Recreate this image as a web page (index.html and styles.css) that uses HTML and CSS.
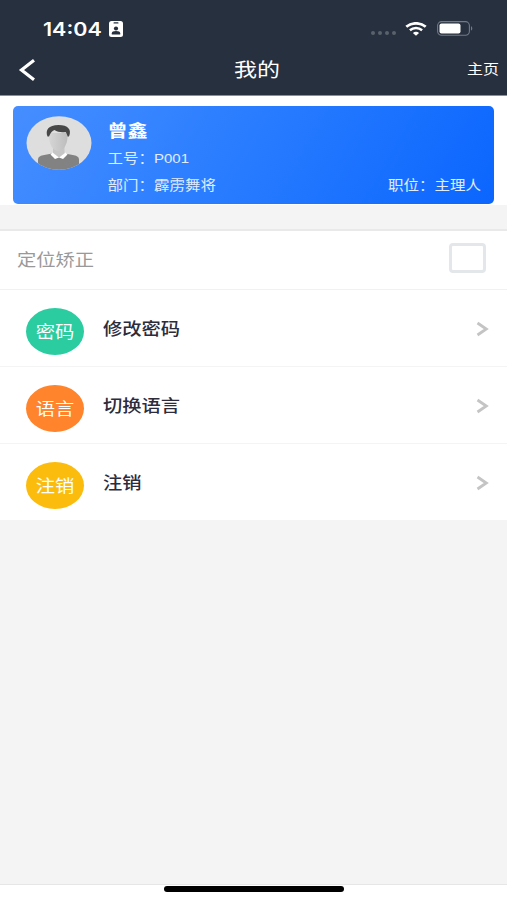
FILE: index.html
```
<!DOCTYPE html>
<html lang="zh-CN">
<head>
    <meta charset="UTF-8">
    <title>我的</title>
    <link rel="stylesheet" href="styles.css">
</head>
<body>
    <!-- Header -->
    <div class="header">
        <div class="status-bar">
            <span class="time txt">14:04</span>
            <svg class="id-icon" width="14" height="16" viewBox="0 0 14 16">
                <rect width="14" height="16" rx="2.5" fill="#fff"/>
                <rect x="4.5" y="1.3" width="5" height="1.3" rx=".6" fill="#27303f"/>
                <circle cx="7" cy="7.500" r="2.100" fill="#27303f"/>
                <path d="M2.800 13.500V12.300c0-1.500 1.500-2.300 4.200-2.300s4.200.8 4.200 2.300v1.200z" fill="#27303f"/>
            </svg>
            <div class="dots"><i></i><i></i><i></i><i></i></div>
            <svg class="wifi" width="22" height="14" viewBox="0 0 22 14">
                <path d="M1.300 4.800C6.600.2 15.400.2 20.700 4.800" fill="none" stroke="#fff" stroke-width="2.800"/>
                <path d="M4.900 8.200C8.400 5.200 13.600 5.200 17.100 8.200" fill="none" stroke="#fff" stroke-width="2.500"/>
                <path d="M7.900 10.900C9.600 9.500 12.400 9.500 14.100 10.900L11 13.800z" fill="#fff"/>
            </svg>
            <svg class="battery" width="36" height="15" viewBox="0 0 36 15">
                <rect x=".6" y=".6" width="31.800" height="13.600" rx="4" fill="none" stroke="#737a85" stroke-width="1.100"/>
                <rect x="2.500" y="2.400" width="21" height="10" rx="2" fill="#fff"/>
                <path d="M34 5.200c1.700.6 1.700 3.800 0 4.400z" fill="#737a85"/>
            </svg>
        </div>
        <div class="nav-bar">
            <svg class="back" width="18" height="22" viewBox="0 0 18 22">
                <path d="M16 1.300L3.500 11l12.500 9.700" fill="none" stroke="#fff" stroke-width="3.200"/>
            </svg>
            <span class="title txt">我的</span>
            <span class="home txt">主页</span>
        </div>
    </div>

    <!-- User card -->
    <div class="profile">
        <div class="card">
            <svg class="avatar" width="66" height="54" viewBox="0 0 66 54">
                <defs>
                    <clipPath id="face"><ellipse cx="33" cy="27" rx="32.500" ry="26.800"/></clipPath>
                    <linearGradient id="skin">
                        <stop offset="0" stop-color="#d6d6d6"/>
                        <stop offset="1" stop-color="#bdbdbd"/>
                    </linearGradient>
                </defs>
                <g clip-path="url(#face)">
                    <rect width="66" height="54" fill="#dedede"/>
                    <path d="M12 54V43.500c0-2.500 2-3.500 5-4.200l9-1.800h13l9 1.800c3 .7 5 1.700 5 4.200V54z" fill="#828282"/>
                    <path d="M27 29h11.500v8.500L33 42l-6-4.500z" fill="#c6c6c6"/>
                    <path d="M26.500 36.500l6.500 5-4 1.500-4.500-4.500zM39.500 36.500L33 41.500l4 1.500 4.500-4.500z" fill="#fff"/>
                    <path d="M23 17h18.500v4c0 7-4 14-9.200 14S23 28 23 21z" fill="url(#skin)"/>
                    <path d="M21.500 20.500c-2.500-6.500 1-11.500 11-11.500 9.500 0 13.500 4.500 10.500 11.500h-1.500c-.3-2-1-3.500-2-4.500-4 .7-8 0-11-2-2 .7-4 2.500-5.500 6.500z" fill="#474747"/>
                </g>
            </svg>
            <div class="info">
                <div class="name"><span class="txt">曾鑫</span></div>
                <div class="line"><span class="txt">工号：<span class="code">P001</span></span></div>
                <div class="line dept">
                    <span class="txt">部门：霹雳舞将</span>
                    <span class="txt">职位：主理人</span>
                </div>
            </div>
        </div>
    </div>

    <!-- Settings -->
    <div class="list">
        <div class="row locate">
            <span class="txt">定位矫正</span>
            <div class="checkbox"></div>
        </div>
        <div class="row">
            <div class="badge green"><span class="txt">密码</span></div>
            <span class="label txt">修改密码</span>
            <svg class="arrow" width="13" height="16" viewBox="0 0 13 16"><path d="M1.500 2L10.300 8l-8.800 6" fill="none" stroke="#c4c4c4" stroke-width="2.800"/></svg>
        </div>
        <div class="row">
            <div class="badge orange"><span class="txt">语言</span></div>
            <span class="label txt">切换语言</span>
            <svg class="arrow" width="13" height="16" viewBox="0 0 13 16"><path d="M1.500 2L10.300 8l-8.800 6" fill="none" stroke="#c4c4c4" stroke-width="2.800"/></svg>
        </div>
        <div class="row">
            <div class="badge yellow"><span class="txt">注销</span></div>
            <span class="label txt">注销</span>
            <svg class="arrow" width="13" height="16" viewBox="0 0 13 16"><path d="M1.500 2L10.300 8l-8.800 6" fill="none" stroke="#c4c4c4" stroke-width="2.800"/></svg>
        </div>
    </div>

    <div class="footer"><div class="home-bar"></div></div>
</body>
</html>
```
FILE: styles.css
```
* {
    box-sizing: border-box;
}
body {
    display: flex;
    flex-direction: column;
    height: 900px;
    margin: 0;
    background: #f4f4f4;
    font-family: "Noto Sans CJK SC", sans-serif;
    overflow: hidden;
}
svg {
    display: block;
    flex: none;
}
/* Wide, flat lettering */
.txt {
    display: inline-block;
    line-height: 1;
    white-space: nowrap;
    transform: scaleY(0.86);
}

/* Header */
.header {
    height: 96px;
    background: #27303f;
    border-bottom: 1px solid #8b8e9c;
    color: #fff;
}
.status-bar {
    display: flex;
    align-items: center;
    height: 45px;
    padding: 12px 34px 0 43px;
}
.time {
    font-family: Inter, sans-serif;
    font-size: 21.5px;
    font-weight: 600;
    width: 66px;
    margin-top: 2px;
}
.id-icon {
    margin-top: 1px;
}
.dots {
    display: flex;
    gap: 3px;
    margin: 9px 9px 0 auto;
}
.dots i {
    width: 4px;
    height: 4px;
    border-radius: 50%;
    background: #59616d;
}
.wifi {
    margin-right: 10px;
}
.nav-bar {
    display: flex;
    align-items: center;
    justify-content: space-between;
    height: 50px;
    padding: 0 8px 0 18px;
}
.title {
    font-size: 23px;
    margin: 0 0 3px 11px;
}
.home {
    font-size: 16px;
    margin-bottom: 4px;
}

/* User card */
.profile {
    height: 109px;
    padding: 10px 13px 0;
    background: #fff;
}
.card {
    display: flex;
    height: 98px;
    padding: 10px 13px 0;
    border-radius: 5px;
    background: linear-gradient(120deg, #468eff 0%, #277bff 50%, #0b66fe 100%);
    color: #fff;
}
.info {
    flex: 1;
    margin: -1px 0 0 15.5px;
}
.name {
    display: flex;
    align-items: center;
    height: 29px;
    font-size: 20px;
    font-weight: bold;
}
.line {
    display: flex;
    align-items: center;
    justify-content: space-between;
    height: 27px;
    font-size: 15.5px;
    color: #e0ecff;
}
.code {
    font-family: "Liberation Sans", sans-serif;
    font-size: 15px;
}

/* Settings list */
.list {
    margin-top: 24px;
    border-top: 2px solid #e9e9e9;
    background: #fff;
}
.row {
    display: flex;
    align-items: center;
    height: 77px;
    padding: 1px 18px 0 26px;
    border-bottom: 1px solid #f4f4f4;
}
.row:last-child {
    height: 76px;
    border-bottom: none;
}
.locate {
    justify-content: space-between;
    height: 59px;
    padding: 0 21px 4px 17px;
    border-bottom: 1px solid #f1f1f1;
    font-size: 19.3px;
    color: #999;
}
.locate .txt {
    margin-top: 3px;
}
.checkbox {
    width: 37px;
    height: 30px;
    border: 3px solid #e4e7e9;
    border-radius: 4px;
}
.badge {
    display: flex;
    align-items: center;
    justify-content: center;
    width: 58px;
    height: 47px;
    margin: 6px 19px 0 0;
    border-radius: 50%;
    font-size: 19.3px;
    color: #fff;
}
.green {
    background: #2bcca0;
}
.orange {
    background: #ff842b;
}
.yellow {
    background: #fcbc0d;
}
.label {
    font-size: 19.3px;
    font-weight: 500;
    color: #2c2c3c;
}
.arrow {
    margin-left: auto;
}

/* Bottom bar */
.footer {
    height: 16px;
    margin-top: auto;
    border-top: 1px solid #e6e6e6;
    background: #fff;
}
.home-bar {
    width: 180px;
    height: 6px;
    margin: 1px auto 0;
    border-radius: 3px;
    background: #000;
}
```
